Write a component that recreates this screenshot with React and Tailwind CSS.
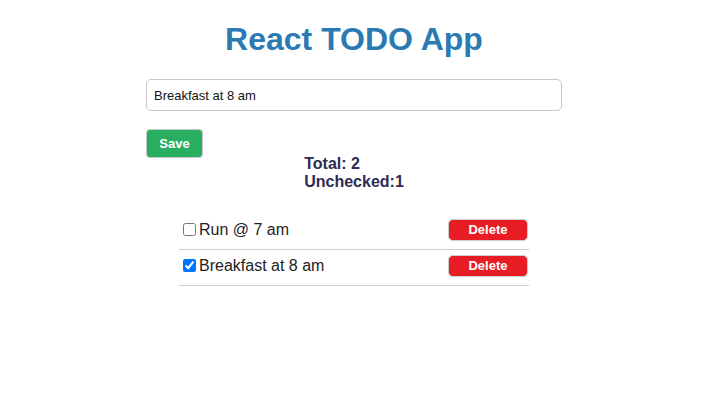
import { useState } from 'react';

const font = { fontFamily: '"Liberation Sans", Arial, sans-serif' };

export default function App() {
  const [text, setText] = useState('Breakfast at 8 am');
  const [todos, setTodos] = useState([
    { id: 1, title: 'Run @ 7 am', done: false },
    { id: 2, title: 'Breakfast at 8 am', done: true },
  ]);

  const toggle = (id) => setTodos((t) => t.map((x) => (x.id === id ? { ...x, done: !x.done } : x)));
  const remove = (id) => setTodos((t) => t.filter((x) => x.id !== id));
  const save = () => {
    if (!text.trim()) return;
    setTodos((t) => [...t, { id: Date.now(), title: text, done: false }]);
    setText('');
  };

  const unchecked = todos.filter((x) => !x.done).length;

  return (
    <div className="min-h-[401px] w-full bg-white pr-[2px] pt-[21px]" style={font}>
      <h1 className="text-center text-[32px] font-bold leading-[37px] text-[#2a7ab4]">React TODO App</h1>

      <div className="mx-auto mt-[21px] w-[416px]">
        <input
          value={text}
          onChange={(e) => setText(e.target.value)}
          className="block h-8 w-full rounded-[5px] border border-[#c8c8c8] pl-[7px] text-[13px] text-[#111] outline-none"
        />
        <button
          onClick={save}
          className="mt-[18px] block h-[29px] w-[57px] rounded-[4px] border border-[#c9c9c9] bg-[#27ae60] text-[13px] font-bold text-white"
        >
          Save
        </button>
      </div>

      <div className="-mt-[3px] flex justify-center">
        <div className="text-[16px] font-bold leading-[18px] text-[#2c2c54]">
          <div>Total: {todos.length}</div>
          <div>Unchecked:{unchecked}</div>
        </div>
      </div>

      <ul className="mx-auto mt-[23px] w-[350px]">
        {todos.map((t) => (
          <li key={t.id} className="flex h-9 items-center justify-between border-b border-[#cfcfcf] pb-[4px] pl-1 pr-px">
            <label className="flex items-center gap-[3px] text-[16px] text-[#222]">
              <input type="checkbox" checked={t.done} onChange={() => toggle(t.id)} className="m-0 h-[13px] w-[13px]" />
              {t.title}
            </label>
            <button
              onClick={() => remove(t.id)}
              className="h-[22px] w-20 rounded-[5px] border border-[#cfcfcf] bg-[#e81c24] text-[13px] font-bold text-white"
            >
              Delete
            </button>
          </li>
        ))}
      </ul>
    </div>
  );
}
